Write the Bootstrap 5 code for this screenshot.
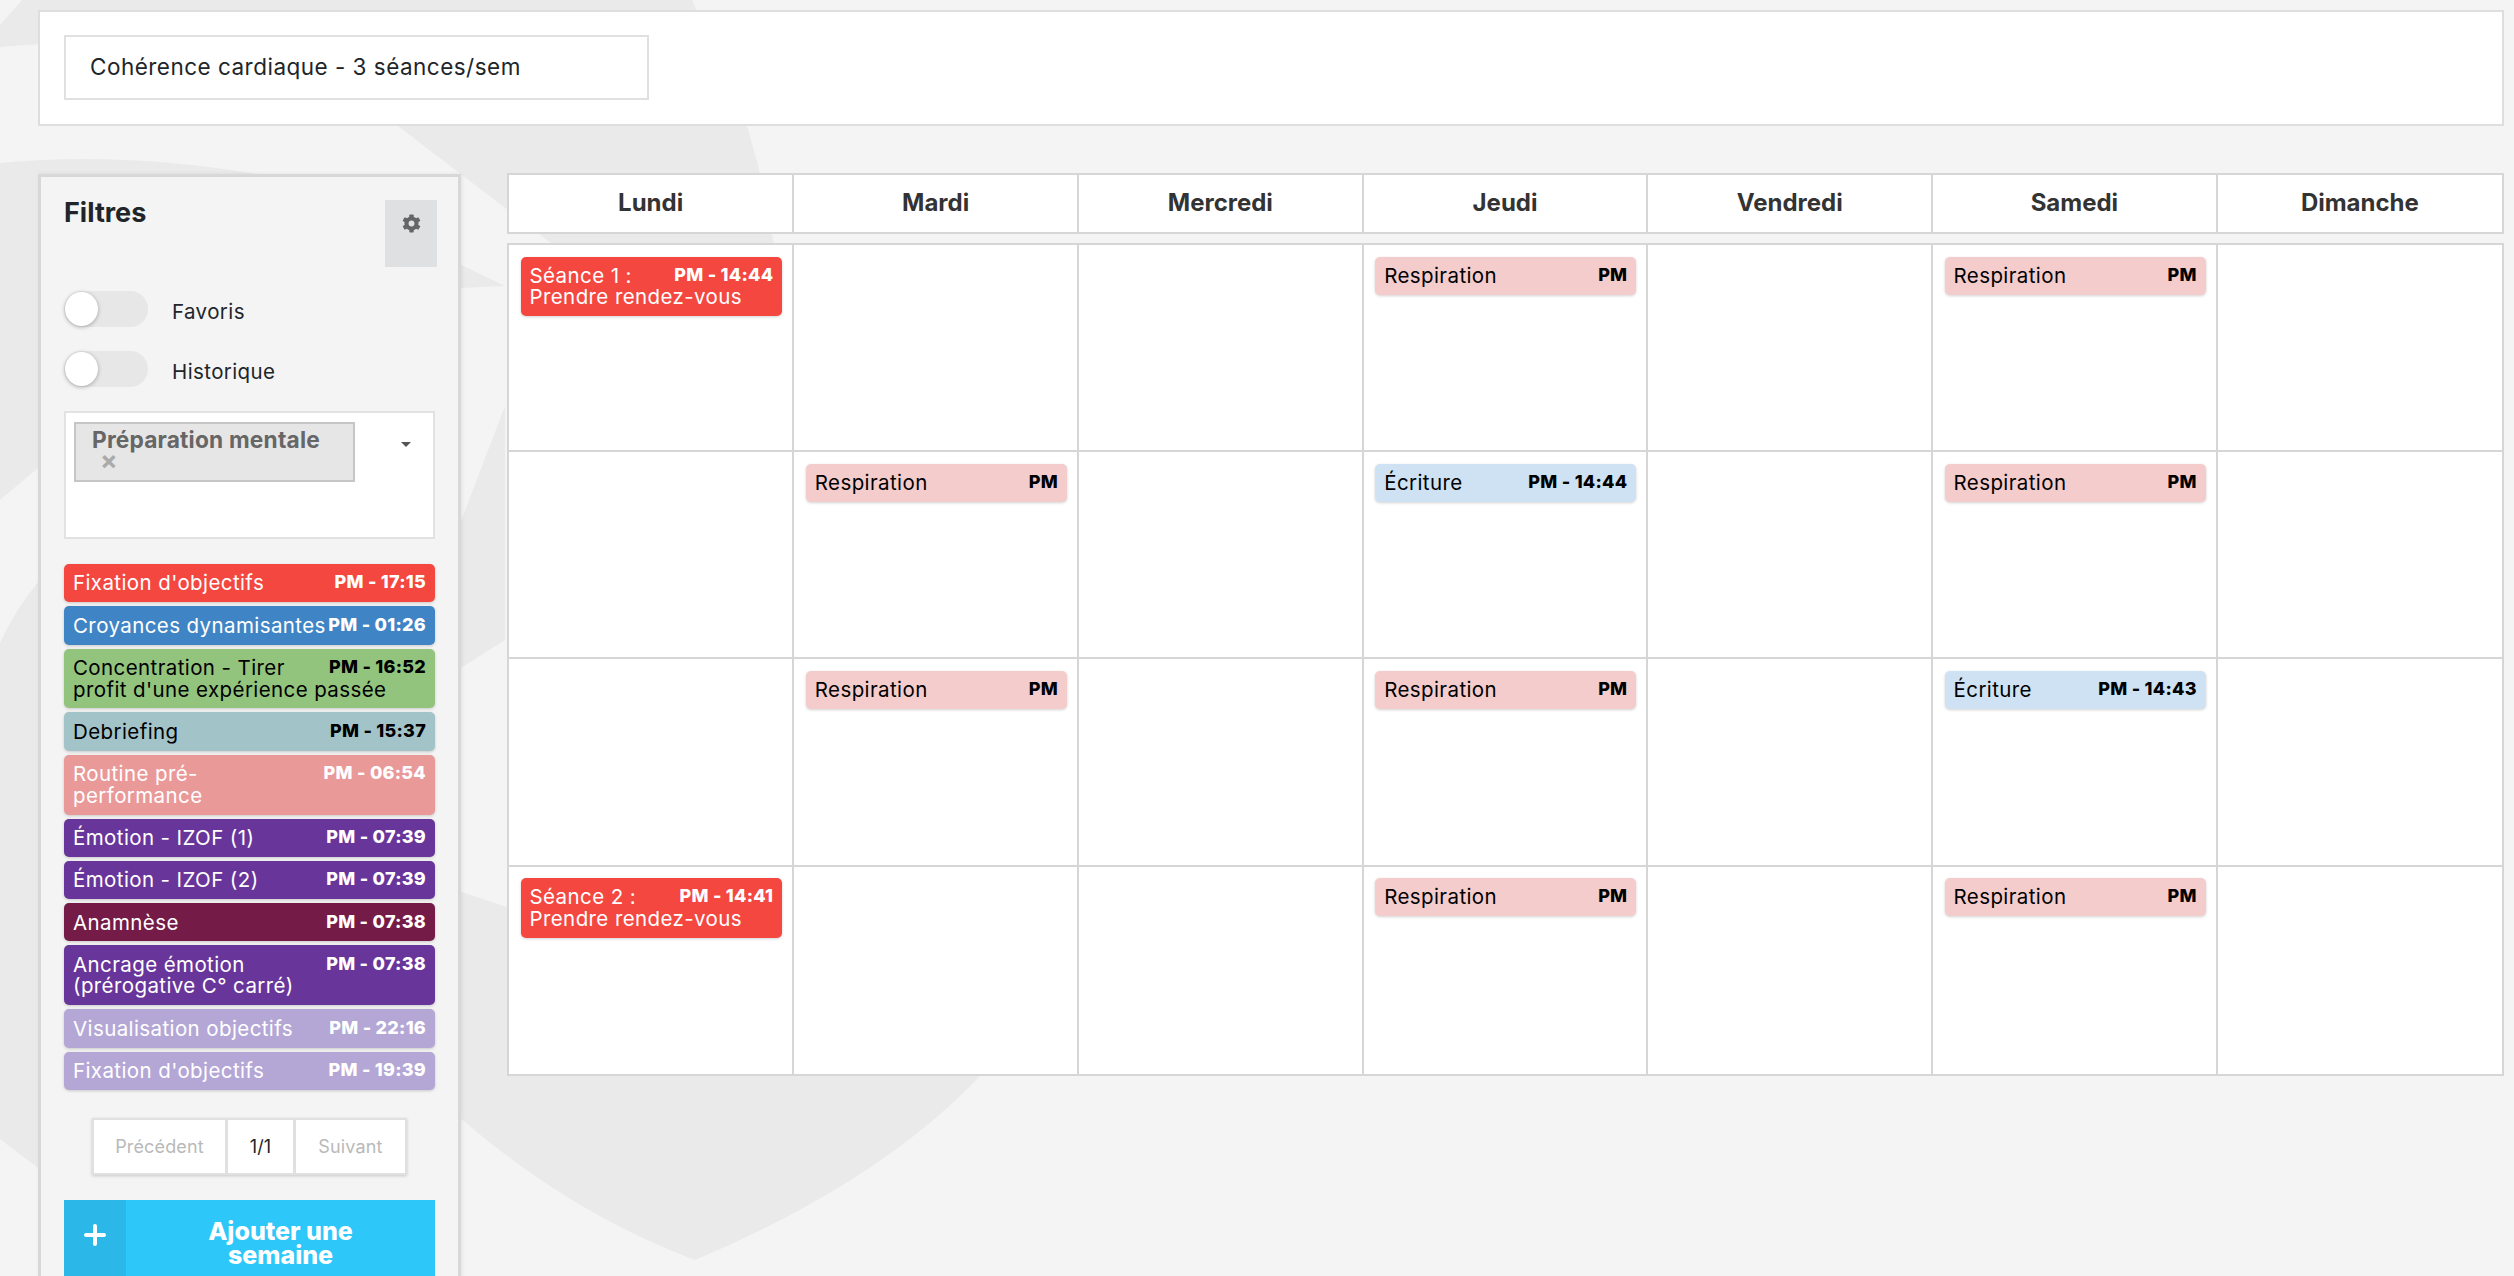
<!DOCTYPE html>
<html lang="fr">
<head>
<meta charset="utf-8">
<title>Semaine</title>
<link href="https://cdn.jsdelivr.net/npm/bootstrap@5.3.0/dist/css/bootstrap.min.css" rel="stylesheet">
<style>
html,body{height:1276px;overflow:hidden}
body{
  font-family:"Inter","Liberation Sans",sans-serif;font-size:20.5px;letter-spacing:.4px;color:#212529;
  background-color:#f4f4f4;
  background-repeat:no-repeat;
  background-image:url("data:image/svg+xml,%3Csvg xmlns='http://www.w3.org/2000/svg' width='2514' height='1276'%3E%3Cg fill='%23eaeaea'%3E%3Cpath d='M22 0L0 25L0 47L40 44L398 126L560 250L775 250L758 165L747 126L692 0Z'/%3E%3Cpath d='M0 163Q130 150 280 178L505 286L440 289L38 468L0 500Z'/%3E%3Cpath d='M0 643Q15 610 38 582L461 521L505 406L505 640L461 668L440 900L38 1168L0 1139Z'/%3E%3Cpath d='M440 885L507 907L990 1060L981 1075Q880 1182 695 1260Q560 1210 440 1100Z'/%3E%3C/g%3E%3C/svg%3E");
}
.page-wrap{padding:10px 12px 0 38px}
.title-box{height:116px;background:#fff;border:2px solid #dedede;padding:23px 24px;margin-right:-2px}
.title-field{width:585px;height:65px;border:2px solid #e0e0e0;padding:0 24px 2px;font-size:22.5px;letter-spacing:.48px;display:flex;align-items:center;background:#fff;color:#212529}
.main-area{margin-top:47px;margin-right:-2px}
.side-panel{width:423px;flex:none;margin-top:1px;height:1200px;background:#f4f4f4;border:3px solid #d8d8d8;padding:23px;box-shadow:1px 0 4px rgba(0,0,0,.08)}
.panel-title{font-size:27px;font-weight:700;line-height:26px;color:#212529;letter-spacing:0}
.gear-btn{width:52px;height:67px;background:#dfe0e2;border:0;border-radius:0;padding:14px 0 0;margin-right:-2px;display:flex;align-items:flex-start;justify-content:center}
.toggle-row{height:36px;margin-top:24px}
.toggle-track{width:84px;height:36px;border-radius:18px;background:#e7e7e7;position:relative;display:block;flex:none}
.toggle-track::before{content:"";position:absolute;left:1px;top:1px;width:33px;height:34px;border-radius:50%;background:#fff;box-shadow:0 1px 4px rgba(0,0,0,.3)}
.toggle-label{margin-left:24px;padding-top:6px}
.tag-select{height:128px;margin-top:24px;background:#fff;border:2px solid #e2e2e2;padding:9px 8px;position:relative}
.tag-chip{width:281px;height:60px;background:#e6e6e6;border:2px solid #c6c6c6;padding:4px 16px;color:#666;font-weight:700;font-size:22.7px;letter-spacing:.2px;line-height:24px}
.tag-x{display:block;color:#aaa;font-size:26px;line-height:18px;padding-left:8px}
.tag-caret{position:absolute;right:22px;top:29px;width:0;height:0;border-left:5px solid transparent;border-right:5px solid transparent;border-top:5px solid #555}
.evt-list{margin-top:25px;gap:4px}
.evt{display:block;border-radius:5px;padding:8.35px 9px;line-height:21.6px;box-shadow:0 1px 3px rgba(0,0,0,.18);overflow:hidden}
.evt-time{float:right;font-weight:800;font-size:18px;letter-spacing:.25px;line-height:19px;white-space:nowrap}
.c-red{background:#f44740;color:#fff}
.c-blue{background:#3f85c5;color:#fff}
.c-green{background:#93c47d;color:#000}
.c-teal{background:#a2c4c9;color:#000}
.c-salmon{background:#ea9999;color:#fff}
.c-purple{background:#68359a;color:#fff}
.c-wine{background:#741b47;color:#fff}
.c-lav{background:#b4a7d6;color:#fff}
.c-pink{background:#f4cccc;color:#000}
.c-sky{background:#cfe2f3;color:#000}
.pager-wrap{margin-top:28px}
.pager-wrap .pagination{margin:0;--bs-pagination-border-radius:0;box-shadow:0 1px 3px rgba(0,0,0,.18)}
.pager-wrap .page-link{height:57px;display:flex;align-items:center;justify-content:center;border:2px solid #e0e0e0;background:#fff;font-size:18px;letter-spacing:.15px;color:#212529;padding:0;border-radius:0!important}
.pager-wrap .page-item.disabled .page-link{color:#b9b9b9;background:#fff;border-color:#e0e0e0}
.pg-prev{width:135px}.pg-cur{width:68px}.pg-next{width:112px}
.add-week{margin-top:25px;height:100px;background:#2dc7fa;color:#fff;display:flex;border:0;border-radius:0;padding:0;width:100%}
.add-icon{width:62px;flex:none;background:#2bb7e8;padding-top:19px}
.add-text{flex:1;font-weight:800;font-size:25px;letter-spacing:0;line-height:24px;padding-top:19px;text-align:center;padding-left:8px;padding-right:8px}
.cal-area{margin-left:46px;flex:1 1 0;min-width:0}
.cal-head{height:61px;background:#fff;border:2px solid #d6d6d6}
.cal-head-cell{flex:0 0 284.7px;min-width:0;border-right:2px solid #d6d6d6;font-weight:700;font-size:24px;letter-spacing:0;color:#333;text-align:center;line-height:55px}
.cal-head-cell:first-child,.cal-cell:first-child{flex-basis:285.3px}
.cal-head-cell:last-child,.cal-cell:last-child{border-right:0;flex:1 1 0}
.cal-body{margin-top:9px;background:#fff;border:2px solid #d6d6d6}
.cal-line{height:207.2px;border-bottom:2px solid #d6d6d6}
.cal-line:last-child{border-bottom:0;height:207.6px}
.cal-cell{flex:0 0 284.7px;min-width:0;border-right:2px solid #d6d6d6;padding:11.5px 10px 0 11.5px}
</style>
</head>
<body>
<div class="page-wrap">
  <div class="title-box"><div class="title-field">Cohérence cardiaque - 3 séances/sem</div></div>
  <div class="main-area d-flex align-items-start">
    <aside class="side-panel">
      <div class="d-flex justify-content-between align-items-start">
        <div class="panel-title">Filtres</div>
        <button class="gear-btn btn" type="button" aria-label="Réglages">
          <svg width="19" height="19" viewBox="0 0 20 20"><g fill="#666"><circle cx="10" cy="10" r="7.4"/><rect x="7.7" y="0.4" width="4.6" height="5" rx=".8"/><rect x="7.7" y="0.4" width="4.6" height="5" rx=".8" transform="rotate(60 10 10)"/><rect x="7.7" y="0.4" width="4.6" height="5" rx=".8" transform="rotate(120 10 10)"/><rect x="7.7" y="0.4" width="4.6" height="5" rx=".8" transform="rotate(180 10 10)"/><rect x="7.7" y="0.4" width="4.6" height="5" rx=".8" transform="rotate(240 10 10)"/><rect x="7.7" y="0.4" width="4.6" height="5" rx=".8" transform="rotate(300 10 10)"/></g><circle cx="10" cy="10" r="3.1" fill="#dfe0e2"/></svg>
        </button>
      </div>
      <div class="toggle-row d-flex align-items-center"><span class="toggle-track"></span><span class="toggle-label">Favoris</span></div>
      <div class="toggle-row d-flex align-items-center"><span class="toggle-track"></span><span class="toggle-label">Historique</span></div>
      <div class="tag-select">
        <div class="tag-chip">Préparation mentale<span class="tag-x">×</span></div>
        <span class="tag-caret"></span>
      </div>
      <div class="evt-list d-flex flex-column">
        <div class="evt c-red"><span class="evt-time">PM - 17:15</span>Fixation d'objectifs</div>
        <div class="evt c-blue"><span class="evt-time">PM - 01:26</span>Croyances dynamisantes</div>
        <div class="evt c-green"><span class="evt-time">PM - 16:52</span>Concentration - Tirer profit d'une expérience passée</div>
        <div class="evt c-teal"><span class="evt-time">PM - 15:37</span>Debriefing</div>
        <div class="evt c-salmon"><span class="evt-time">PM - 06:54</span>Routine pré-performance</div>
        <div class="evt c-purple"><span class="evt-time">PM - 07:39</span>Émotion - IZOF (1)</div>
        <div class="evt c-purple"><span class="evt-time">PM - 07:39</span>Émotion - IZOF (2)</div>
        <div class="evt c-wine"><span class="evt-time">PM - 07:38</span>Anamnèse</div>
        <div class="evt c-purple"><span class="evt-time">PM - 07:38</span>Ancrage émotion (prérogative C° carré)</div>
        <div class="evt c-lav"><span class="evt-time">PM - 22:16</span>Visualisation objectifs</div>
        <div class="evt c-lav"><span class="evt-time">PM - 19:39</span>Fixation d'objectifs</div>
      </div>
      <nav class="pager-wrap d-flex justify-content-center">
        <ul class="pagination">
          <li class="page-item disabled pg-prev"><span class="page-link">Précédent</span></li>
          <li class="page-item pg-cur"><span class="page-link">1/1</span></li>
          <li class="page-item disabled pg-next"><span class="page-link">Suivant</span></li>
        </ul>
      </nav>
      <button class="add-week" type="button">
        <span class="add-icon"><svg width="24" height="24" viewBox="0 0 24 24"><path d="M12 3v18M3 12h18" stroke="#fff" stroke-width="4" stroke-linecap="round"/></svg></span>
        <span class="add-text">Ajouter une<br>semaine</span>
      </button>
    </aside>
    <section class="cal-area">
      <div class="cal-head d-flex">
        <div class="cal-head-cell">Lundi</div><div class="cal-head-cell">Mardi</div><div class="cal-head-cell">Mercredi</div><div class="cal-head-cell">Jeudi</div><div class="cal-head-cell">Vendredi</div><div class="cal-head-cell">Samedi</div><div class="cal-head-cell">Dimanche</div>
      </div>
      <div class="cal-body">
        <div class="cal-line d-flex">
          <div class="cal-cell"><div class="evt c-red"><span class="evt-time">PM - 14:44</span>Séance 1 :<br>Prendre rendez-vous</div></div>
          <div class="cal-cell"></div><div class="cal-cell"></div>
          <div class="cal-cell"><div class="evt c-pink"><span class="evt-time">PM</span>Respiration</div></div>
          <div class="cal-cell"></div>
          <div class="cal-cell"><div class="evt c-pink"><span class="evt-time">PM</span>Respiration</div></div>
          <div class="cal-cell"></div>
        </div>
        <div class="cal-line d-flex">
          <div class="cal-cell"></div>
          <div class="cal-cell"><div class="evt c-pink"><span class="evt-time">PM</span>Respiration</div></div>
          <div class="cal-cell"></div>
          <div class="cal-cell"><div class="evt c-sky"><span class="evt-time">PM - 14:44</span>Écriture</div></div>
          <div class="cal-cell"></div>
          <div class="cal-cell"><div class="evt c-pink"><span class="evt-time">PM</span>Respiration</div></div>
          <div class="cal-cell"></div>
        </div>
        <div class="cal-line d-flex">
          <div class="cal-cell"></div>
          <div class="cal-cell"><div class="evt c-pink"><span class="evt-time">PM</span>Respiration</div></div>
          <div class="cal-cell"></div>
          <div class="cal-cell"><div class="evt c-pink"><span class="evt-time">PM</span>Respiration</div></div>
          <div class="cal-cell"></div>
          <div class="cal-cell"><div class="evt c-sky"><span class="evt-time">PM - 14:43</span>Écriture</div></div>
          <div class="cal-cell"></div>
        </div>
        <div class="cal-line d-flex">
          <div class="cal-cell"><div class="evt c-red"><span class="evt-time">PM - 14:41</span>Séance 2 :<br>Prendre rendez-vous</div></div>
          <div class="cal-cell"></div><div class="cal-cell"></div>
          <div class="cal-cell"><div class="evt c-pink"><span class="evt-time">PM</span>Respiration</div></div>
          <div class="cal-cell"></div>
          <div class="cal-cell"><div class="evt c-pink"><span class="evt-time">PM</span>Respiration</div></div>
          <div class="cal-cell"></div>
        </div>
      </div>
    </section>
  </div>
</div>
<script src="https://cdn.jsdelivr.net/npm/bootstrap@5.3.0/dist/js/bootstrap.bundle.min.js"></script>
</body>
</html>
